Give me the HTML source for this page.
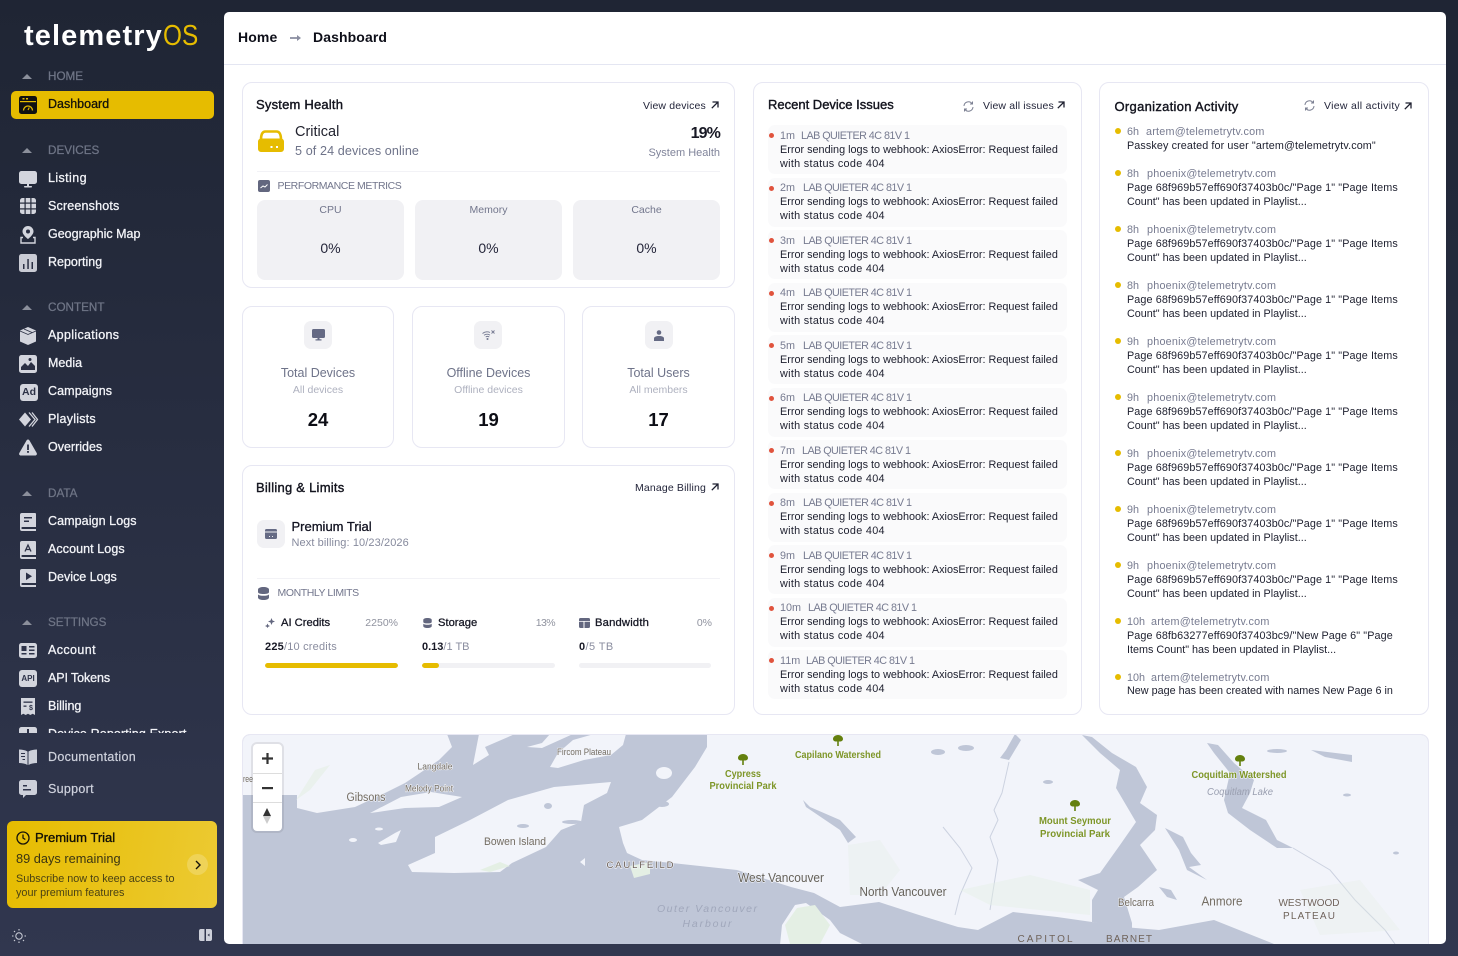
<!DOCTYPE html>
<html lang="en"><head><meta charset="utf-8"><title>telemetryOS Dashboard</title>
<style>
*{box-sizing:border-box}
html,body{margin:0;padding:0}
body{width:1458px;height:956px;overflow:hidden;position:relative;background:linear-gradient(180deg,#1f2534 0%,#31374f 100%);font-family:"Liberation Sans",sans-serif;color:#1b1d2b}
.t{position:absolute;white-space:nowrap;line-height:14px;height:14px}
svg.i{position:absolute;display:block;overflow:visible}
.sh{font-size:11.7px;color:#6f7586;left:48px;margin-top:1px;-webkit-text-stroke:.25px #6f7586}
.si{font-size:12.5px;color:#f3f4f8;left:48px;-webkit-text-stroke:.28px #f3f4f8}
.car{position:absolute;left:22px;width:0;height:0;border-left:5px solid transparent;border-right:5px solid transparent;border-bottom:5px solid #8b8f9b}
#main{position:absolute;left:224px;top:12px;width:1222px;height:932px;background:#fff;border-radius:5px;overflow:hidden}
#c{position:absolute;left:-224px;top:-12px;width:1458px;height:956px}
.card{position:absolute;background:#fff;border:1px solid #e7e7f3;border-radius:10px}
.h{font-size:13px;color:#14151f;-webkit-text-stroke:.4px #14151f}
.lnk{font-size:10.5px;color:#23253a;letter-spacing:.15px}
.mb{position:absolute;top:200px;width:147px;height:80px;background:#f1f1f4;border-radius:8px}
.ml{font-size:10.5px;color:#72768c;text-align:center}
.mv{font-size:14px;color:#25263a;text-align:center}
.ib{position:absolute;width:28px;height:28px;background:#f1f1f4;border-radius:7px}
.st{font-size:12.5px;color:#6e7389;text-align:center}
.ss{font-size:10.5px;color:#aeb1bf;text-align:center}
.sn{font-size:18.5px;font-weight:bold;color:#0c0d15;text-align:center}
.sec{font-size:10.5px;color:#72768c;left:277.5px;letter-spacing:-.42px}
.b{position:absolute;height:5px;border-radius:3px;background:#f1f1f4;top:663px;overflow:hidden}
.b i{display:block;height:5px;background:#e6bc00;border-radius:3px}
.ir{position:absolute;left:768px;width:299px;height:49px;background:#fafafb;border-radius:7px}
.d{position:absolute;border-radius:50%}
.e{font-size:10.85px;color:#1d1f2e;left:780px}
.e+.e{letter-spacing:.3px}
.m{font-size:10.8px;color:#777b90}
.m+.m{letter-spacing:.22px}
.m.n{letter-spacing:-.55px}
.a{font-size:10.8px;color:#1d1f2e;left:1127px;letter-spacing:.1px}
.a+.a{letter-spacing:0}
.l{font-size:11.2px;color:#171825;-webkit-text-stroke:.3px #171825}
.pc{font-size:10.5px;color:#90939f}
.u{font-size:11px;color:#8a8d9f}
.u b{color:#171825}
</style></head><body>

<!-- SIDEBAR -->
<div class="t" style="left:24px;top:18px;height:36px;line-height:36px;font-size:29px;font-weight:bold;color:#fff;letter-spacing:1.1px">telemetry<span style="display:inline-block;font-weight:normal;color:#e6bc00;letter-spacing:0;margin-left:0;transform:scaleX(.84);transform-origin:0 50%">OS</span></div>

<div class="car" style="top:74px"></div><div class="t sh" style="top:69px">HOME</div>
<div style="position:absolute;left:11px;top:91px;width:203px;height:28px;background:#e6bc00;border-radius:5px"></div>
<svg class="i" style="left:19px;top:96px" width="18" height="18" viewBox="0 0 18 18"><rect width="18" height="18" rx="2.5" fill="#111"/><rect x="1" y="5" width="16" height="1.2" fill="#e6bc00"/><rect x="3.500" y="2" width="2" height="1.500" fill="#e6bc00"/><rect x="7" y="2" width="2" height="1.500" fill="#e6bc00"/><path d="M4.500 14.500a4.500 4.500 0 0 1 9 0" fill="none" stroke="#e6bc00" stroke-width="1.300"/><path d="M9 14l1.300-2.500" stroke="#e6bc00" stroke-width="1.100"/></svg>
<div class="t si" style="top:97px;color:#14120a;-webkit-text-stroke:.3px #14120a">Dashboard</div>

<div class="car" style="top:148px"></div><div class="t sh" style="top:143px">DEVICES</div>
<svg class="i" style="left:19px;top:171px" width="18" height="17" viewBox="0 0 18 17"><rect width="18" height="13" rx="2.500" fill="#d3d5dd"/><rect x="8" y="13" width="2" height="2.500" fill="#d3d5dd"/><rect x="5" y="15" width="8" height="1.500" rx=".7" fill="#d3d5dd"/></svg>
<div class="t si" style="top:171px;letter-spacing:.4px">Listing</div>
<svg class="i" style="left:20px;top:198px" width="16" height="16" viewBox="0 0 16 16" fill="#d3d5dd"><path d="M0 2.500A2.500 2.500 0 0 1 2.500 0H4.500V4.500H0Z"/><rect x="5.700" width="4.600" height="4.500"/><path d="M11.500 0h2A2.500 2.500 0 0 1 16 2.500V4.500H11.500Z"/><rect y="5.700" width="4.500" height="4.600"/><rect x="5.700" y="5.700" width="4.600" height="4.600"/><rect x="11.500" y="5.700" width="4.500" height="4.600"/><path d="M0 11.500H4.500V16H2.500A2.500 2.500 0 0 1 0 13.500Z"/><rect x="5.700" y="11.500" width="4.600" height="4.500"/><path d="M11.500 11.500H16V13.500A2.500 2.500 0 0 1 13.500 16H11.500Z"/></svg>
<div class="t si" style="top:199px;letter-spacing:.18px">Screenshots</div>
<svg class="i" style="left:20px;top:226px" width="16" height="18" viewBox="0 0 16 18"><path d="M8 0a5.500 5.500 0 0 1 5.500 5.500C13.500 9 8 13 8 13S2.500 9 2.500 5.500A5.500 5.500 0 0 1 8 0Z" fill="#d3d5dd"/><circle cx="8" cy="5.500" r="2" fill="#282d41"/><path d="M3 11.500H1v5.500h14v-5.500h-2" fill="none" stroke="#d3d5dd" stroke-width="1.400"/></svg>
<div class="t si" style="top:227px">Geographic Map</div>
<svg class="i" style="left:19px;top:254px" width="18" height="18" viewBox="0 0 18 18"><rect width="18" height="18" rx="2.500" fill="#c9cbd4"/><rect x="4" y="10" width="1.500" height="5" fill="#2a2f43"/><rect x="8.300" y="5" width="1.500" height="10" fill="#2a2f43"/><rect x="12.500" y="8" width="1.500" height="7" fill="#2a2f43"/></svg>
<div class="t si" style="top:255px">Reporting</div>

<div class="car" style="top:305px"></div><div class="t sh" style="top:300px">CONTENT</div>
<svg class="i" style="left:20px;top:327px" width="16" height="18" viewBox="0 0 16 18"><path d="M8 0l8 3.500v11L8 18 0 14.500v-11Z" fill="#d3d5dd"/><path d="M0 4l8 3.500L16 4M4 2l8 3.500" fill="none" stroke="#2a2f43" stroke-width=".8"/></svg>
<div class="t si" style="top:328px;letter-spacing:.33px">Applications</div>
<svg class="i" style="left:19px;top:355px" width="18" height="18" viewBox="0 0 18 18"><rect width="18" height="18" rx="2.500" fill="#d3d5dd"/><path d="M2 15v-3l4-4 3 3 3-4 4 4v4Z" fill="#2a2f43"/><circle cx="11" cy="4.500" r="1.500" fill="#2a2f43"/></svg>
<div class="t si" style="top:356px">Media</div>
<div class="t" style="left:20px;top:384px;width:18px;height:17px;background:#d3d5dd;border-radius:3px;font-size:10.5px;line-height:17px;font-weight:bold;text-align:center;color:#2c3146">Ad</div>
<div class="t si" style="top:384px;letter-spacing:.1px">Campaigns</div>
<svg class="i" style="left:19px;top:412px" width="19" height="15" viewBox="0 0 19 15"><path d="M6 0.500l6 7-6 7-6-7Z" fill="#d3d5dd"/><path d="M10 .5l6 7-6 7M13 .5l5.500 7-5.500 7" fill="none" stroke="#d3d5dd" stroke-width="1.300"/></svg>
<div class="t si" style="top:412px;letter-spacing:.22px">Playlists</div>
<svg class="i" style="left:19px;top:439px" width="18" height="17" viewBox="0 0 18 17"><path d="M9 .5c.7 0 1.200.4 1.500 1L17.700 14c.6 1.200-.2 2.500-1.500 2.500H1.800C.5 16.500-.3 15.200.3 14L7.500 1.500C7.800.9 8.300.5 9 .5Z" fill="#d3d5dd"/><rect x="8.100" y="5.500" width="1.800" height="5.500" fill="#2a2f43"/><rect x="8.100" y="12" width="1.800" height="1.800" fill="#2a2f43"/></svg>
<div class="t si" style="top:440px">Overrides</div>

<div class="car" style="top:491px"></div><div class="t sh" style="top:486px">DATA</div>
<svg class="i" style="left:20px;top:513px" width="16" height="18" viewBox="0 0 16 18"><path d="M2 0h13a1 1 0 0 1 1 1v13H2.500C1 14 1 16 2.500 16H16v2H2a2 2 0 0 1-2-2V2a2 2 0 0 1 2-2Z" fill="#d3d5dd"/><rect x="4" y="4" width="8" height="1.500" fill="#2c3146"/><rect x="4" y="7.500" width="5" height="1.500" fill="#2c3146"/></svg>
<div class="t si" style="top:514px;letter-spacing:.08px">Campaign Logs</div>
<svg class="i" style="left:20px;top:541px" width="16" height="18" viewBox="0 0 16 18"><path d="M2 0h13a1 1 0 0 1 1 1v13H2.500C1 14 1 16 2.500 16H16v2H2a2 2 0 0 1-2-2V2a2 2 0 0 1 2-2Z" fill="#d3d5dd"/><path d="M5 10.500L8 4l3 6.500M6 8.500h4" fill="none" stroke="#2c3146" stroke-width="1.300"/></svg>
<div class="t si" style="top:542px;letter-spacing:.08px">Account Logs</div>
<svg class="i" style="left:20px;top:569px" width="16" height="18" viewBox="0 0 16 18"><path d="M2 0h13a1 1 0 0 1 1 1v13H2.500C1 14 1 16 2.500 16H16v2H2a2 2 0 0 1-2-2V2a2 2 0 0 1 2-2Z" fill="#d3d5dd"/><path d="M6 3.500l6 3.800-6 3.800Z" fill="#2c3146"/></svg>
<div class="t si" style="top:570px">Device Logs</div>

<div class="car" style="top:620px"></div><div class="t sh" style="top:615px">SETTINGS</div>
<svg class="i" style="left:19px;top:643px" width="18" height="15" viewBox="0 0 18 15"><rect width="18" height="15" rx="2.500" fill="#d3d5dd"/><rect x="2.500" y="3" width="5" height="5" fill="#2e3349"/><rect x="2.500" y="10" width="5" height="1.500" fill="#2e3349"/><rect x="10" y="3" width="5.500" height="1.500" fill="#2e3349"/><rect x="10" y="6.500" width="5.500" height="1.500" fill="#2e3349"/><rect x="10" y="10" width="5.500" height="1.500" fill="#2e3349"/></svg>
<div class="t si" style="top:643px;letter-spacing:.4px">Account</div>
<div class="t" style="left:19px;top:670px;width:18px;height:17px;background:#d3d5dd;border-radius:3px;font-size:8px;line-height:17px;font-weight:bold;text-align:center;color:#2e3349">API</div>
<div class="t si" style="top:671px;letter-spacing:-.1px">API Tokens</div>
<svg class="i" style="left:20px;top:698px" width="16" height="18" viewBox="0 0 16 18"><path d="M1 0h14v17l-2.300-1.300L10.300 17 8 15.700 5.700 17l-2.400-1.300L1 17Z" fill="#d3d5dd"/><rect x="3.500" y="3.500" width="9" height="1.300" fill="#2e3349"/><rect x="3.500" y="7.500" width="3" height="1.300" fill="#2e3349"/><text x="11" y="12" font-size="7" font-weight="bold" text-anchor="middle" fill="#2e3349">$</text></svg>
<div class="t si" style="top:699px">Billing</div>
<div style="position:absolute;left:0;top:720px;width:224px;height:13px;overflow:hidden">
<svg class="i" style="left:19px;top:7px" width="18" height="18"><rect width="18" height="18" rx="2.500" fill="#d3d5dd"/><rect x="8" y="2" width="2" height="6" fill="#2e3349"/></svg>
<div class="t si" style="top:7px;letter-spacing:.13px">Device Reporting Export</div></div>

<svg class="i" style="left:19px;top:749px" width="18" height="16" viewBox="0 0 18 16"><path d="M0 .5c3 0 6 .5 8.500 2V16C6 14.500 3 14 0 14Z" fill="#cdd0da"/><path d="M18 .5c-3 0-6 .5-8.500 2V16c2.500-1.500 5.500-2 8.500-2Z" fill="#cdd0da"/><path d="M2 4.500h4M2 7.500h4M3.500 10.500h2.500" stroke="#2e3349" stroke-width="1"/></svg>
<div class="t si" style="top:750px;color:#cfd2dd;-webkit-text-stroke:.2px #cfd2dd;letter-spacing:.3px">Documentation</div>
<svg class="i" style="left:19px;top:780px" width="18" height="18" viewBox="0 0 18 18"><path d="M2.500 0h13A2.500 2.500 0 0 1 18 2.500v10a2.500 2.500 0 0 1-2.500 2.500H7l-3 3v-3H2.500A2.500 2.500 0 0 1 0 12.500v-10A2.500 2.500 0 0 1 2.500 0Z" fill="#cdd0da"/><rect x="4" y="5" width="4" height="1.500" fill="#2f344b"/><rect x="4" y="9" width="8" height="1.500" fill="#2f344b"/></svg>
<div class="t si" style="top:782px;color:#cfd2dd;-webkit-text-stroke:.2px #cfd2dd;letter-spacing:.3px">Support</div>

<div style="position:absolute;left:7px;top:821px;width:210px;height:87px;border-radius:6px;background:linear-gradient(100deg,#e6bc00 0%,#ecca33 100%)"></div>
<svg class="i" style="left:16px;top:831px" width="14" height="14" viewBox="0 0 14 14" fill="none" stroke="#17140a" stroke-width="1.300"><circle cx="7" cy="7" r="6"/><path d="M7 3.500V7l2.300 1.500"/></svg>
<div class="t" style="left:35px;top:831px;font-size:13px;color:#100e06;-webkit-text-stroke:.35px #100e06">Premium Trial</div>
<div class="t" style="left:16px;top:852px;font-size:12.8px;color:#3b3512">89 days remaining</div>
<div class="t" style="left:16px;top:872px;font-size:10.85px;color:#4a4214">Subscribe now to keep access to</div>
<div class="t" style="left:16px;top:886px;font-size:10.85px;color:#4a4214">your premium features</div>
<div class="d" style="left:187px;top:854px;width:21px;height:21px;background:rgba(255,255,255,.2)"></div>
<svg class="i" style="left:195px;top:860px" width="6" height="10" viewBox="0 0 6 10"><path d="M1 1l4 4-4 4" fill="none" stroke="#17140a" stroke-width="1.400"/></svg>
<svg class="i" style="left:12px;top:929px" width="14" height="14" viewBox="0 0 14 14" fill="none" stroke="#cdd0da" stroke-width="1"><circle cx="7" cy="7" r="3.200"/><path d="M7 0v1.500M7 12.500V14M0 7h1.500M12.500 7H14M2 2l1 1M11 11l1 1M2 12l1-1" stroke-width="1.100"/></svg>
<svg class="i" style="left:199px;top:929px" width="13" height="12" viewBox="0 0 13 12"><path d="M2 0h3.500v12H2a2 2 0 0 1-2-2V2a2 2 0 0 1 2-2ZM7 0h4a2 2 0 0 1 2 2v8a2 2 0 0 1-2 2H7Z" fill="#cdd0da"/><path d="M10.500 4.500L8.500 6l2 1.500Z" fill="#2f344b"/></svg>

<!-- MAIN -->
<div id="main"><div id="c">
<div class="t" style="left:238px;top:30px;font-size:14px;font-weight:bold;color:#0d0e18;letter-spacing:.12px">Home</div>
<svg class="i" style="left:290px;top:34px" width="11" height="8" viewBox="0 0 11 8"><path d="M0 4h9" stroke="#8a8da0" stroke-width="1.800"/><path d="M7 1l4 3-4 3Z" fill="#8a8da0"/></svg>
<div class="t" style="left:313px;top:30px;font-size:14px;font-weight:bold;color:#0d0e18;letter-spacing:.1px">Dashboard</div>
<div style="position:absolute;left:224px;top:64px;width:1222px;height:1px;background:#e4e6f2"></div>

<!-- System Health -->
<div class="card" style="left:242px;top:82px;width:493px;height:206px"></div>
<div class="t h" style="left:256px;top:98px;letter-spacing:.2px">System Health</div>
<div class="t lnk" style="left:643px;top:99px">View devices</div>
<svg class="i" style="left:711px;top:101px" width="8" height="8" viewBox="0 0 8 8"><path d="M.8 7.200L7 1M1.500 1H7v5.500" fill="none" stroke="#1e2030" stroke-width="1.300"/></svg>
<svg class="i" style="left:258px;top:129px" width="26" height="24" viewBox="0 0 26 24"><path d="M3 11C3 5 4.500 2.500 7.500 2.500h11C21.500 2.500 23 5 23 11" fill="none" stroke="#e6bc00" stroke-width="2.600"/><path d="M3 9.500h20a3 3 0 0 1 3 3V20a3 3 0 0 1-3 3H3a3 3 0 0 1-3-3v-7.500a3 3 0 0 1 3-3Z" fill="#e6bc00"/><rect x="12.500" y="17" width="2" height="2" fill="#fff"/><rect x="18" y="17" width="2" height="2" fill="#fff"/></svg>
<div class="t" style="left:295px;top:125px;font-size:14.5px;color:#22232f">Critical</div>
<div class="t" style="left:295px;top:144px;font-size:12.6px;color:#6e7389;letter-spacing:.1px">5 of 24 devices online</div>
<div class="t" style="right:738px;top:127px;font-size:16px;font-weight:bold;color:#181925;letter-spacing:-.9px">19%</div>
<div class="t" style="right:738px;top:146px;font-size:11px;color:#80849a">System Health</div>
<div style="position:absolute;left:257px;top:171px;width:463px;height:1px;background:#f2f2f6"></div>
<svg class="i" style="left:258px;top:180px" width="12" height="12" viewBox="0 0 12 12"><rect width="12" height="12" rx="2" fill="#63677f"/><path d="M2.500 8l2.500-2 2 1 2.500-2.500" fill="none" stroke="#fff" stroke-width="1"/></svg>
<div class="t sec" style="top:179px">PERFORMANCE METRICS</div>
<div class="mb" style="left:257px"></div><div class="mb" style="left:415px"></div><div class="mb" style="left:573px"></div>
<div class="t ml" style="left:257px;width:147px;top:203px">CPU</div>
<div class="t ml" style="left:415px;width:147px;top:203px">Memory</div>
<div class="t ml" style="left:573px;width:147px;top:203px">Cache</div>
<div class="t mv" style="left:257px;width:147px;top:241px">0%</div>
<div class="t mv" style="left:415px;width:147px;top:241px">0%</div>
<div class="t mv" style="left:573px;width:147px;top:241px">0%</div>

<!-- Stats -->
<div class="card" style="left:242px;top:306px;width:152px;height:142px"></div>
<div class="card" style="left:412px;top:306px;width:153px;height:142px"></div>
<div class="card" style="left:582px;top:306px;width:153px;height:142px"></div>
<div class="ib" style="left:304px;top:321px"></div><div class="ib" style="left:474px;top:321px"></div><div class="ib" style="left:645px;top:321px"></div>
<svg class="i" style="left:312px;top:329px" width="13" height="12" viewBox="0 0 13 12"><rect width="13" height="9" rx="1.500" fill="#656a84"/><rect x="5.500" y="9" width="2" height="2" fill="#656a84"/><rect x="3.500" y="10.300" width="6" height="1.200" fill="#656a84"/></svg>
<svg class="i" style="left:482px;top:330px" width="13" height="10" viewBox="0 0 13 10" fill="none" stroke="#757a92" stroke-width=".9"><path d="M.5 3.500C3 1.500 6 1.500 8 2.500M2 5.200c2-1.300 4.500-1.300 6 0M3.700 7c1-.7 2.500-.7 3.500 0"/><circle cx="5.500" cy="9" r=".6" fill="#757a92"/><path d="M9.500.5l3 3M12.500.5l-3 3"/></svg>
<svg class="i" style="left:654px;top:330px" width="10" height="11" viewBox="0 0 10 11" fill="#656a84"><circle cx="5" cy="2.500" r="2.300"/><path d="M0 11V8.500C0 6.800 2 6 5 6s5 .8 5 2.500V11Z"/></svg>
<div class="t st" style="left:242px;width:152px;top:366px">Total Devices</div>
<div class="t st" style="left:412px;width:153px;top:366px">Offline Devices</div>
<div class="t st" style="left:582px;width:153px;top:366px">Total Users</div>
<div class="t ss" style="left:242px;width:152px;top:383px">All devices</div>
<div class="t ss" style="left:412px;width:153px;top:383px">Offline devices</div>
<div class="t ss" style="left:582px;width:153px;top:383px">All members</div>
<div class="t sn" style="left:242px;width:152px;top:413px">24</div>
<div class="t sn" style="left:412px;width:153px;top:413px">19</div>
<div class="t sn" style="left:582px;width:153px;top:413px">17</div>

<!-- Billing -->
<div class="card" style="left:242px;top:465px;width:493px;height:250px"></div>
<div class="t h" style="left:256px;top:481px;letter-spacing:.25px">Billing &amp; Limits</div>
<div class="t lnk" style="left:635px;top:481px">Manage Billing</div>
<svg class="i" style="left:711px;top:483px" width="8" height="8" viewBox="0 0 8 8"><path d="M.8 7.200L7 1M1.500 1H7v5.500" fill="none" stroke="#1e2030" stroke-width="1.300"/></svg>
<div class="ib" style="left:257px;top:520px"></div>
<svg class="i" style="left:265px;top:529px" width="12" height="10" viewBox="0 0 12 10"><rect width="12" height="10" rx="1.500" fill="#656a84"/><rect y="2.500" width="12" height="1" fill="#f1f1f4"/><rect x="4" y="7" width="1" height="1" fill="#f1f1f4"/><rect x="7" y="7" width="1" height="1" fill="#f1f1f4"/></svg>
<div class="t" style="left:291.5px;top:520px;font-size:13px;color:#111220;-webkit-text-stroke:.3px #111220">Premium Trial</div>
<div class="t" style="left:291.5px;top:536px;font-size:11px;color:#868a9d;letter-spacing:.1px">Next billing: 10/23/2026</div>
<div style="position:absolute;left:257px;top:578px;width:463px;height:1px;background:#f2f2f6"></div>
<svg class="i" style="left:258px;top:587px" width="11" height="13" viewBox="0 0 11 13" fill="#63677f"><path d="M0 2.500C0 1 2.500 0 5.500 0S11 1 11 2.500V5c0 1.500-2.500 2-5.500 2S0 6.500 0 5Z"/><path d="M0 7.500c1 1 3 1.300 5.500 1.300S10 8.500 11 7.500v3C11 12 8.500 13 5.500 13S0 12 0 10.500Z"/></svg>
<div class="t sec" style="top:586px">MONTHLY LIMITS</div>

<svg class="i" style="left:265px;top:618px" width="10" height="10" viewBox="0 0 10 10" fill="#63677f"><path d="M6.500 0l1 2.500L10 3.500l-2.500 1-1 2.500-1-2.500L3 3.500l2.500-1Z"/><path d="M2.500 5.500l.8 1.700L5 8l-1.700.8L2.500 10l-.8-1.200L0 8l1.700-.8Z"/></svg>
<div class="t l" style="left:281px;top:616px">AI Credits</div>
<div class="t pc" style="right:1060px;top:616px">2250%</div>
<svg class="i" style="left:423px;top:618px" width="9" height="10" viewBox="0 0 11 13" fill="#63677f"><path d="M0 2.500C0 1 2.500 0 5.500 0S11 1 11 2.500V5c0 1.500-2.500 2-5.500 2S0 6.500 0 5Z"/><path d="M0 7.500c1 1 3 1.300 5.500 1.300S10 8.500 11 7.500v3C11 12 8.500 13 5.500 13S0 12 0 10.500Z"/></svg>
<div class="t l" style="left:438px;top:616px">Storage</div>
<div class="t pc" style="right:903px;top:616px;letter-spacing:-.6px">13%</div>
<svg class="i" style="left:579px;top:618px" width="11" height="10" viewBox="0 0 11 10" fill="#63677f"><path d="M1.500 0h8A1.500 1.500 0 0 1 11 1.500V3H0V1.500A1.500 1.500 0 0 1 1.500 0Z"/><path d="M0 3.800h4.500V10H1.500A1.500 1.500 0 0 1 0 8.500ZM5.500 3.800H11v4.700A1.500 1.500 0 0 1 9.500 10h-4Z"/></svg>
<div class="t l" style="left:595px;top:616px;letter-spacing:.2px">Bandwidth</div>
<div class="t pc" style="right:746px;top:616px">0%</div>
<div class="t u" style="left:265px;top:640px;letter-spacing:.2px"><b>225</b>/10 credits</div>
<div class="t u" style="left:422px;top:640px"><b>0.13</b>/1 TB</div>
<div class="t u" style="left:579px;top:640px;letter-spacing:.4px"><b>0</b>/5 TB</div>
<div class="b" style="left:265px;width:133px"><i style="width:133px"></i></div>
<div class="b" style="left:422px;width:133px"><i style="width:17px"></i></div>
<div class="b" style="left:579px;width:132px"></div>

<!-- Issues -->
<div class="card" style="left:753px;top:82px;width:329px;height:633px"></div>
<div class="t h" style="left:768px;top:98px">Recent Device Issues</div>
<svg class="i" style="left:963px;top:100.5px" width="11" height="11" viewBox="0 0 11 11" fill="none" stroke="#7c8093" stroke-width="1"><path d="M1 5a4.500 4.500 0 0 1 8-2.500M10 6a4.500 4.500 0 0 1-8 2.500"/><path d="M9.500 .5v2.500H7M1.500 10.500V8H4"/></svg>
<div class="t lnk" style="left:983px;top:99px">View all issues</div>
<svg class="i" style="left:1057px;top:101px" width="8" height="8" viewBox="0 0 8 8"><path d="M.8 7.200L7 1M1.500 1H7v5.500" fill="none" stroke="#1e2030" stroke-width="1.300"/></svg>

<div class="ir" style="top:125px"></div><div class="d" style="left:768.5px;top:133px;width:5px;height:5px;background:#e0533d"></div>
<div class="t m" style="left:780px;top:128.5px">1m</div><div class="t m n" style="left:801px;top:128.5px">LAB QUIETER 4C 81V 1</div>
<div class="t e" style="top:142.5px">Error sending logs to webhook: AxiosError: Request failed</div><div class="t e" style="top:156.5px">with status code 404</div>
<div class="ir" style="top:177.5px"></div><div class="d" style="left:768.5px;top:185.5px;width:5px;height:5px;background:#e0533d"></div>
<div class="t m" style="left:780px;top:181px">2m</div><div class="t m n" style="left:803px;top:181px">LAB QUIETER 4C 81V 1</div>
<div class="t e" style="top:195px">Error sending logs to webhook: AxiosError: Request failed</div><div class="t e" style="top:209px">with status code 404</div>
<div class="ir" style="top:230px"></div><div class="d" style="left:768.5px;top:238px;width:5px;height:5px;background:#e0533d"></div>
<div class="t m" style="left:780px;top:233.5px">3m</div><div class="t m n" style="left:803px;top:233.5px">LAB QUIETER 4C 81V 1</div>
<div class="t e" style="top:247.5px">Error sending logs to webhook: AxiosError: Request failed</div><div class="t e" style="top:261.5px">with status code 404</div>
<div class="ir" style="top:282.5px"></div><div class="d" style="left:768.5px;top:290.5px;width:5px;height:5px;background:#e0533d"></div>
<div class="t m" style="left:780px;top:286px">4m</div><div class="t m n" style="left:803px;top:286px">LAB QUIETER 4C 81V 1</div>
<div class="t e" style="top:300px">Error sending logs to webhook: AxiosError: Request failed</div><div class="t e" style="top:314px">with status code 404</div>
<div class="ir" style="top:335px"></div><div class="d" style="left:768.5px;top:343px;width:5px;height:5px;background:#e0533d"></div>
<div class="t m" style="left:780px;top:338.5px">5m</div><div class="t m n" style="left:803px;top:338.5px">LAB QUIETER 4C 81V 1</div>
<div class="t e" style="top:352.5px">Error sending logs to webhook: AxiosError: Request failed</div><div class="t e" style="top:366.5px">with status code 404</div>
<div class="ir" style="top:387.5px"></div><div class="d" style="left:768.5px;top:395.5px;width:5px;height:5px;background:#e0533d"></div>
<div class="t m" style="left:780px;top:391px">6m</div><div class="t m n" style="left:803px;top:391px">LAB QUIETER 4C 81V 1</div>
<div class="t e" style="top:405px">Error sending logs to webhook: AxiosError: Request failed</div><div class="t e" style="top:419px">with status code 404</div>
<div class="ir" style="top:440px"></div><div class="d" style="left:768.5px;top:448px;width:5px;height:5px;background:#e0533d"></div>
<div class="t m" style="left:780px;top:443.5px">7m</div><div class="t m n" style="left:802px;top:443.5px">LAB QUIETER 4C 81V 1</div>
<div class="t e" style="top:457.5px">Error sending logs to webhook: AxiosError: Request failed</div><div class="t e" style="top:471.5px">with status code 404</div>
<div class="ir" style="top:492.5px"></div><div class="d" style="left:768.5px;top:500.5px;width:5px;height:5px;background:#e0533d"></div>
<div class="t m" style="left:780px;top:496px">8m</div><div class="t m n" style="left:803px;top:496px">LAB QUIETER 4C 81V 1</div>
<div class="t e" style="top:510px">Error sending logs to webhook: AxiosError: Request failed</div><div class="t e" style="top:524px">with status code 404</div>
<div class="ir" style="top:545px"></div><div class="d" style="left:768.5px;top:553px;width:5px;height:5px;background:#e0533d"></div>
<div class="t m" style="left:780px;top:548.5px">9m</div><div class="t m n" style="left:803px;top:548.5px">LAB QUIETER 4C 81V 1</div>
<div class="t e" style="top:562.5px">Error sending logs to webhook: AxiosError: Request failed</div><div class="t e" style="top:576.5px">with status code 404</div>
<div class="ir" style="top:597.5px"></div><div class="d" style="left:768.5px;top:605.5px;width:5px;height:5px;background:#e0533d"></div>
<div class="t m" style="left:780px;top:601px">10m</div><div class="t m n" style="left:808px;top:601px">LAB QUIETER 4C 81V 1</div>
<div class="t e" style="top:615px">Error sending logs to webhook: AxiosError: Request failed</div><div class="t e" style="top:629px">with status code 404</div>
<div class="ir" style="top:650px"></div><div class="d" style="left:768.5px;top:658px;width:5px;height:5px;background:#e0533d"></div>
<div class="t m" style="left:780px;top:653.5px">11m</div><div class="t m n" style="left:806px;top:653.5px">LAB QUIETER 4C 81V 1</div>
<div class="t e" style="top:667.5px">Error sending logs to webhook: AxiosError: Request failed</div><div class="t e" style="top:681.5px">with status code 404</div>

<!-- Activity -->
<div class="card" style="left:1099px;top:82px;width:330px;height:633px"></div>
<div class="t h" style="left:1114.5px;top:100px;letter-spacing:.3px">Organization Activity</div>
<svg class="i" style="left:1303.5px;top:100px" width="11" height="11" viewBox="0 0 11 11" fill="none" stroke="#7c8093" stroke-width="1"><path d="M1 5a4.500 4.500 0 0 1 8-2.500M10 6a4.500 4.500 0 0 1-8 2.500"/><path d="M9.500 .5v2.500H7M1.500 10.500V8H4"/></svg>
<div class="t lnk" style="left:1324px;top:99px;letter-spacing:.3px">View all activity</div>
<svg class="i" style="left:1404px;top:102px" width="8" height="8" viewBox="0 0 8 8"><path d="M.8 7.200L7 1M1.500 1H7v5.500" fill="none" stroke="#1e2030" stroke-width="1.300"/></svg>

<div class="d" style="left:1114.5px;top:128px;width:6px;height:6px;background:#e6bc00"></div>
<div class="t m" style="left:1127px;top:124.5px">6h</div><div class="t m" style="left:1146px;top:124.5px">artem@telemetrytv.com</div>
<div class="t a" style="top:138.5px">Passkey created for user "artem@telemetrytv.com"</div>
<div class="d" style="left:1114.5px;top:170px;width:6px;height:6px;background:#e6bc00"></div>
<div class="t m" style="left:1127px;top:166.5px">8h</div><div class="t m" style="left:1147px;top:166.5px">phoenix@telemetrytv.com</div>
<div class="t a" style="top:180.5px">Page 68f969b57eff690f37403b0c/"Page 1" "Page Items</div><div class="t a" style="top:194.5px">Count" has been updated in Playlist...</div>
<div class="d" style="left:1114.5px;top:226px;width:6px;height:6px;background:#e6bc00"></div>
<div class="t m" style="left:1127px;top:222.5px">8h</div><div class="t m" style="left:1147px;top:222.5px">phoenix@telemetrytv.com</div>
<div class="t a" style="top:236.5px">Page 68f969b57eff690f37403b0c/"Page 1" "Page Items</div><div class="t a" style="top:250.5px">Count" has been updated in Playlist...</div>
<div class="d" style="left:1114.5px;top:282px;width:6px;height:6px;background:#e6bc00"></div>
<div class="t m" style="left:1127px;top:278.5px">8h</div><div class="t m" style="left:1147px;top:278.5px">phoenix@telemetrytv.com</div>
<div class="t a" style="top:292.5px">Page 68f969b57eff690f37403b0c/"Page 1" "Page Items</div><div class="t a" style="top:306.5px">Count" has been updated in Playlist...</div>
<div class="d" style="left:1114.5px;top:338px;width:6px;height:6px;background:#e6bc00"></div>
<div class="t m" style="left:1127px;top:334.5px">9h</div><div class="t m" style="left:1147px;top:334.5px">phoenix@telemetrytv.com</div>
<div class="t a" style="top:348.5px">Page 68f969b57eff690f37403b0c/"Page 1" "Page Items</div><div class="t a" style="top:362.5px">Count" has been updated in Playlist...</div>
<div class="d" style="left:1114.5px;top:394px;width:6px;height:6px;background:#e6bc00"></div>
<div class="t m" style="left:1127px;top:390.5px">9h</div><div class="t m" style="left:1147px;top:390.5px">phoenix@telemetrytv.com</div>
<div class="t a" style="top:404.5px">Page 68f969b57eff690f37403b0c/"Page 1" "Page Items</div><div class="t a" style="top:418.5px">Count" has been updated in Playlist...</div>
<div class="d" style="left:1114.5px;top:450px;width:6px;height:6px;background:#e6bc00"></div>
<div class="t m" style="left:1127px;top:446.5px">9h</div><div class="t m" style="left:1147px;top:446.5px">phoenix@telemetrytv.com</div>
<div class="t a" style="top:460.5px">Page 68f969b57eff690f37403b0c/"Page 1" "Page Items</div><div class="t a" style="top:474.5px">Count" has been updated in Playlist...</div>
<div class="d" style="left:1114.5px;top:506px;width:6px;height:6px;background:#e6bc00"></div>
<div class="t m" style="left:1127px;top:502.5px">9h</div><div class="t m" style="left:1147px;top:502.5px">phoenix@telemetrytv.com</div>
<div class="t a" style="top:516.5px">Page 68f969b57eff690f37403b0c/"Page 1" "Page Items</div><div class="t a" style="top:530.5px">Count" has been updated in Playlist...</div>
<div class="d" style="left:1114.5px;top:562px;width:6px;height:6px;background:#e6bc00"></div>
<div class="t m" style="left:1127px;top:558.5px">9h</div><div class="t m" style="left:1147px;top:558.5px">phoenix@telemetrytv.com</div>
<div class="t a" style="top:572.5px">Page 68f969b57eff690f37403b0c/"Page 1" "Page Items</div><div class="t a" style="top:586.5px">Count" has been updated in Playlist...</div>
<div class="d" style="left:1114.5px;top:618px;width:6px;height:6px;background:#e6bc00"></div>
<div class="t m" style="left:1127px;top:614.5px">10h</div><div class="t m" style="left:1151px;top:614.5px">artem@telemetrytv.com</div>
<div class="t a" style="top:628.5px">Page 68fb63277eff690f37403bc9/"New Page 6" "Page</div><div class="t a" style="top:642.5px">Items Count" has been updated in Playlist...</div>
<div class="d" style="left:1114.5px;top:674px;width:6px;height:6px;background:#e6bc00"></div>
<div class="t m" style="left:1127px;top:670.5px">10h</div><div class="t m" style="left:1151px;top:670.5px">artem@telemetrytv.com</div>
<div style="position:absolute;left:1100px;top:684px;width:320px;height:11.5px;overflow:hidden"><div class="t" style="left:27px;top:0;font-size:10.8px;color:#1d1f2e">New page has been created with names New Page 6 in</div></div>

<!-- MAP -->
<div style="position:absolute;left:242px;top:734px;width:1187px;height:222px;border:1px solid #e7e7f3;border-radius:8px;overflow:hidden;background:#bfc6d7">
<svg width="1187" height="222" viewBox="243 735 1187 222" style="display:block" font-family="'Liberation Sans',sans-serif">
<g fill="#f2f4fa">
<path d="M243 734H447L452 747L439 760L420 773L405 783L385 793L355 807L317 813L297 808L297 795L243 795Z"/>
<path d="M370 813L401 797L431 792L462 797L439 807L405 808L378 812Z"/>
<path d="M479 734H515L485 747L489 755L473 765Z"/>
<path d="M527 747L542 743L550 734H573L542 748Z"/>
<path d="M550 767L558 753L573 740L594 734H626L623 745L611 755L584 760L558 768Z"/>
<ellipse cx="664" cy="773" rx="8" ry="6"/>
<path d="M408 865L435 853L435 837L470 820L508 800L554 787L611 782L607 793L584 805L581 822L561 830L546 847L512 863L500 872L454 873L412 872Z"/>
<path d="M378 843L395 833L401 830L396 842L381 845Z"/><ellipse cx="353" cy="840" rx="4" ry="2"/><ellipse cx="379" cy="829" rx="4" ry="1.5"/><path d="M580 862L585 858L585 866Z"/>
<path d="M707 734V747L695 767L672 797L642 820L619 827L623 843L627 853L642 860L672 863L737 870L791 887L814 893L840 907L879 902L919 915L958 927L978 930L1013 912L1057 917L1092 922L1124 927L1159 930L1214 920L1274 944H1430V734Z"/>
<path d="M782 925L795 905L806 903L830 920L840 933L864 945H780Z"/>
</g>
<g fill="#bfc6d7">
<path d="M1082 735L1092 737L1112 753L1136 767L1147 787L1140 803L1157 815L1155 830L1140 845L1157 870L1138 887L1124 897L1132 923L1132 930L1092 922L1092 900L1098 890L1078 880L1100 873L1120 845L1136 822L1116 788L1120 770L1100 753Z"/>
<path d="M1165 828L1183 837L1191 853L1201 865L1189 867L1207 880L1187 870L1179 850Z"/>
<path d="M1159 887L1171 890L1177 900L1167 897Z"/>
<path d="M1207 743L1218 745L1234 763L1254 780L1250 793L1242 808L1266 820L1277 840L1293 848L1277 848L1250 830L1228 813L1224 800L1230 773L1214 753Z"/>
<path d="M1015 734L1021 740L1009 760L1000 758L1006 750Z"/>
<ellipse cx="938" cy="752" rx="7" ry="3"/><ellipse cx="966" cy="748" rx="8" ry="3"/>
<path d="M1311 750L1352 755L1352 762L1325 757Z"/><ellipse cx="1277" cy="751" rx="10" ry="2"/><ellipse cx="1048" cy="782" rx="5" ry="2"/><ellipse cx="1396" cy="853" rx="3" ry="1.5"/><ellipse cx="1347" cy="795" rx="4" ry="1.5"/>
<ellipse cx="662" cy="804" rx="7" ry="3"/><ellipse cx="523" cy="826" rx="6" ry="2"/><ellipse cx="548" cy="806" rx="4" ry="3"/><ellipse cx="572" cy="822" rx="10" ry="2"/>
<path d="M803 800L810 807L840 820L856 837L848 843L840 830L806 807Z"/>
</g>
<g fill="none" stroke="#ccd2e0" stroke-width="1">
<path d="M1009 762L1002 793L994 810L998 820L990 837L998 860L990 910"/>
<path d="M943 827L960 848L972 868L960 895L955 915"/>
<path d="M1293 848L1330 870L1355 900L1385 930L1395 944"/>
</g>
<g fill="#e4efe4">
<path d="M630 866L650 862L650 874L634 878Z"/>
<path d="M785 925L797 908L815 905L830 925L820 944H790Z"/>
<path d="M848 845L880 840L900 870L880 895L850 895Z" opacity=".35"/>
<path d="M960 890L1030 875L1090 890L1090 915L990 905Z" opacity=".4"/>
<path d="M1300 890L1360 880L1400 930L1320 935Z" opacity=".3"/>
<path d="M296 800L315 770L330 765L310 790Z" opacity=".6"/><path d="M480 870L500 862L510 866L490 872Z"/>
</g>
<g font-size="9.5" fill="#746d62" stroke="#f2f4fa" stroke-width="1.2" paint-order="stroke" text-anchor="middle">
<text x="435" y="769.5" textLength="35" lengthAdjust="spacingAndGlyphs">Langdale</text>
<text x="429" y="791.5" textLength="48" lengthAdjust="spacingAndGlyphs">Melody Point</text>
<text x="584" y="755" textLength="54" lengthAdjust="spacingAndGlyphs">Fircom Plateau</text>
<text x="248" y="782" textLength="10" lengthAdjust="spacingAndGlyphs">ree</text>
<text x="366" y="801" font-size="11.5" textLength="39" lengthAdjust="spacingAndGlyphs">Gibsons</text>
<text x="515" y="845" font-size="11" textLength="62" lengthAdjust="spacingAndGlyphs">Bowen Island</text>
<text x="781" y="882" font-size="12.5" fill="#66625a" textLength="86" lengthAdjust="spacingAndGlyphs">West Vancouver</text>
<text x="903" y="896" font-size="12.5" fill="#66625a" textLength="87" lengthAdjust="spacingAndGlyphs">North Vancouver</text>
<text x="1136" y="906" font-size="11" textLength="36" lengthAdjust="spacingAndGlyphs">Belcarra</text>
<text x="1222" y="905.5" font-size="12.5" textLength="41" lengthAdjust="spacingAndGlyphs">Anmore</text>
<text x="640" y="868" font-size="9.5" fill="#6f635a" textLength="67">CAULFEILD</text>
<text x="1309" y="906" font-size="10" fill="#6f635a" textLength="61">WESTWOOD</text>
<text x="1309" y="919" font-size="10" fill="#6f635a" textLength="52">PLATEAU</text>
<text x="1045" y="942" font-size="10" fill="#6f635a" textLength="55" stroke="none">CAPITOL</text>
<text x="1129" y="942" font-size="10" fill="#6f635a" textLength="46" stroke="none">BARNET</text>
</g>
<g font-size="10.5" font-style="italic" fill="#a0a7bb" text-anchor="middle">
<text x="707" y="912" textLength="100">Outer Vancouver</text>
<text x="707" y="927" textLength="49">Harbour</text>
<text x="1240" y="795" font-size="10" fill="#9a9fb0" textLength="66" lengthAdjust="spacingAndGlyphs">Coquitlam Lake</text>
</g>
<g font-size="10.5" font-weight="bold" fill="#7e9628" stroke="#f2f4fa" stroke-width="1.2" paint-order="stroke" text-anchor="middle">
<text x="743" y="777" textLength="36" lengthAdjust="spacingAndGlyphs">Cypress</text>
<text x="743" y="789" textLength="67" lengthAdjust="spacingAndGlyphs">Provincial Park</text>
<text x="838" y="758" textLength="86" lengthAdjust="spacingAndGlyphs">Capilano Watershed</text>
<text x="1075" y="824" textLength="72" lengthAdjust="spacingAndGlyphs">Mount Seymour</text>
<text x="1075" y="837" textLength="70" lengthAdjust="spacingAndGlyphs">Provincial Park</text>
<text x="1239" y="778" textLength="95" lengthAdjust="spacingAndGlyphs">Coquitlam Watershed</text>
</g>
<g fill="#64800e">
<path d="M743 754c3 0 5 2 5 4 0 1.500-1.500 2.500-3 2.500h-1.200v4.500h-1.600v-4.500H741c-1.500 0-3-1-3-2.500 0-2 2-4 5-4Z"/>
<path d="M838 735c3 0 5 2 5 4 0 1.500-1.500 2.500-3 2.500h-1.200v4.500h-1.600v-4.500H836c-1.500 0-3-1-3-2.500 0-2 2-4 5-4Z"/>
<path d="M1075 800c3 0 5 2 5 4 0 1.500-1.500 2.500-3 2.500h-1.200v4.500h-1.600v-4.500H1073c-1.500 0-3-1-3-2.500 0-2 2-4 5-4Z"/>
<path d="M1240 755c3 0 5 2 5 4 0 1.500-1.500 2.500-3 2.500h-1.200v4.500h-1.600v-4.500H1238c-1.500 0-3-1-3-2.500 0-2 2-4 5-4Z"/>
</g>
</svg>
</div>
<!-- map controls -->
<div style="position:absolute;left:253px;top:744px;width:29px;height:87px;background:#fff;border-radius:4px;box-shadow:0 0 0 2px rgba(0,0,0,.08)"></div>
<div style="position:absolute;left:253px;top:773px;width:29px;height:1px;background:#ddd"></div>
<div style="position:absolute;left:253px;top:802px;width:29px;height:1px;background:#ddd"></div>
<svg class="i" style="left:262px;top:753px" width="11" height="11" viewBox="0 0 11 11"><path d="M5.500 0v11M0 5.500h11" stroke="#333" stroke-width="2.200"/></svg>
<svg class="i" style="left:262px;top:787px" width="11" height="3" viewBox="0 0 11 3"><rect width="11" height="2.200" fill="#333"/></svg>
<svg class="i" style="left:262px;top:808px" width="10" height="17" viewBox="0 0 10 17"><path d="M5 0l4 8H1Z" fill="#333"/><path d="M5 16l4-8H1Z" fill="#ccc"/></svg>
</div></div>
</body></html>
